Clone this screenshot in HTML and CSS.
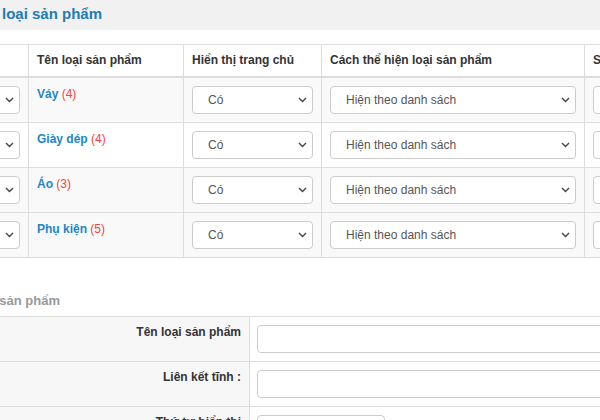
FILE: index.html
```html
<!DOCTYPE html>
<html lang="vi">
<head>
<meta charset="utf-8">
<title>Loại sản phẩm</title>
<link rel="stylesheet" href="styles.css">
</head>
<body>
<header class="topbar">
  <h1 class="page-title">Danh sách loại sản phẩm</h1>
</header>
<main class="page">
  <table class="grid">
    <colgroup>
      <col class="c-order"><col class="c-name"><col class="c-home"><col class="c-mode"><col class="c-sort">
    </colgroup>
    <thead>
      <tr>
        <th>Thứ tự</th>
        <th>Tên loại sản phẩm</th>
        <th>Hiển thị trang chủ</th>
        <th>Cách thể hiện loại sản phẩm</th>
        <th>Sắp xếp</th>
      </tr>
    </thead>
    <tbody>
      <tr class="alt">
        <td><div class="select"><span>1</span><svg class="chev" width="9" height="6" viewBox="0 0 9 6"><polyline points="1,1 4.5,4.5 8,1"/></svg></div></td>
        <td><a class="cat" href="#">Váy</a> <span class="count">(4)</span></td>
        <td><div class="select"><span>Có</span><svg class="chev" width="9" height="6" viewBox="0 0 9 6"><polyline points="1,1 4.5,4.5 8,1"/></svg></div></td>
        <td><div class="select"><span>Hiện theo danh sách</span><svg class="chev" width="9" height="6" viewBox="0 0 9 6"><polyline points="1,1 4.5,4.5 8,1"/></svg></div></td>
        <td><div class="select"><span>1</span><svg class="chev" width="9" height="6" viewBox="0 0 9 6"><polyline points="1,1 4.5,4.5 8,1"/></svg></div></td>
      </tr>
      <tr>
        <td><div class="select"><span>2</span><svg class="chev" width="9" height="6" viewBox="0 0 9 6"><polyline points="1,1 4.5,4.5 8,1"/></svg></div></td>
        <td><a class="cat" href="#">Giày dép</a> <span class="count">(4)</span></td>
        <td><div class="select"><span>Có</span><svg class="chev" width="9" height="6" viewBox="0 0 9 6"><polyline points="1,1 4.5,4.5 8,1"/></svg></div></td>
        <td><div class="select"><span>Hiện theo danh sách</span><svg class="chev" width="9" height="6" viewBox="0 0 9 6"><polyline points="1,1 4.5,4.5 8,1"/></svg></div></td>
        <td><div class="select"><span>2</span><svg class="chev" width="9" height="6" viewBox="0 0 9 6"><polyline points="1,1 4.5,4.5 8,1"/></svg></div></td>
      </tr>
      <tr class="alt">
        <td><div class="select"><span>3</span><svg class="chev" width="9" height="6" viewBox="0 0 9 6"><polyline points="1,1 4.5,4.5 8,1"/></svg></div></td>
        <td><a class="cat" href="#">Áo</a> <span class="count">(3)</span></td>
        <td><div class="select"><span>Có</span><svg class="chev" width="9" height="6" viewBox="0 0 9 6"><polyline points="1,1 4.5,4.5 8,1"/></svg></div></td>
        <td><div class="select"><span>Hiện theo danh sách</span><svg class="chev" width="9" height="6" viewBox="0 0 9 6"><polyline points="1,1 4.5,4.5 8,1"/></svg></div></td>
        <td><div class="select"><span>3</span><svg class="chev" width="9" height="6" viewBox="0 0 9 6"><polyline points="1,1 4.5,4.5 8,1"/></svg></div></td>
      </tr>
      <tr class="alt">
        <td><div class="select"><span>4</span><svg class="chev" width="9" height="6" viewBox="0 0 9 6"><polyline points="1,1 4.5,4.5 8,1"/></svg></div></td>
        <td><a class="cat" href="#">Phụ kiện</a> <span class="count">(5)</span></td>
        <td><div class="select"><span>Có</span><svg class="chev" width="9" height="6" viewBox="0 0 9 6"><polyline points="1,1 4.5,4.5 8,1"/></svg></div></td>
        <td><div class="select"><span>Hiện theo danh sách</span><svg class="chev" width="9" height="6" viewBox="0 0 9 6"><polyline points="1,1 4.5,4.5 8,1"/></svg></div></td>
        <td><div class="select"><span>4</span><svg class="chev" width="9" height="6" viewBox="0 0 9 6"><polyline points="1,1 4.5,4.5 8,1"/></svg></div></td>
      </tr>
    </tbody>
  </table>

  <div class="legend">Thêm loại sản phẩm</div>
  <table class="form">
    <colgroup><col class="c-label"><col class="c-field"></colgroup>
    <tbody>
      <tr><th>Tên loại sản phẩm</th><td><input class="input" type="text"></td></tr>
      <tr><th>Liên kết tĩnh :</th><td><input class="input" type="text"></td></tr>
      <tr><th>Thứ tự hiển thị</th><td><input class="input short" type="text"></td></tr>
    </tbody>
  </table>
</main>
</body>
</html>
```
FILE: styles.css
```css
html, body {
  margin: 0;
  padding: 0;
  overflow: hidden;
  background: #fff;
}
body {
  font-family: "Liberation Sans", Arial, sans-serif;
  font-size: 12px;
  line-height: 17px;
  color: #333;
  width: 600px;
  height: 420px;
}

.topbar {
  height: 30px;
  background: #f1f1f1;
  overflow: hidden;
}
.page-title {
  margin: 0 0 0 -78px;
  font-size: 15px;
  font-weight: bold;
  line-height: 28px;
  color: #1f7bb3;
  white-space: nowrap;
}

.page {
  margin: 14px 0 0 -52px;
  width: 760px;
}

.grid {
  width: 760px;
  table-layout: fixed;
  border-collapse: separate;
  border-spacing: 0;
  border-top: 1px solid #ddd;
}
.c-order { width: 80px; }
.c-name { width: 155px; }
.c-home { width: 138px; }
.c-mode { width: 263px; }
.c-sort { width: 124px; }

.grid th,
.grid td {
  text-align: left;
  vertical-align: top;
  border-left: 1px solid #ddd;
  white-space: nowrap;
  overflow: hidden;
}
.grid th:first-child,
.grid td:first-child {
  border-left: 0;
}
.grid th {
  padding: 7px 8px;
  font-weight: bold;
  color: #333;
  border-bottom: 2px solid #ddd;
}
.grid td {
  padding: 8px;
  border-bottom: 1px solid #ddd;
}
.grid tr.alt td {
  background: #f9f9f9;
}

.cat {
  font-weight: bold;
  color: #1d86c6;
  text-decoration: none;
}
.count {
  color: #f1453d;
}

.select {
  display: flex;
  align-items: center;
  box-sizing: border-box;
  height: 28px;
  padding: 0 5px 0 15px;
  border: 1px solid #ccc;
  border-radius: 4px;
  background: #fff;
  color: #555;
}
.select span {
  flex: 1;
  overflow: hidden;
}
.chev {
  flex: none;
}
.chev polyline {
  fill: none;
  stroke: #444;
  stroke-width: 1.4;
}

.legend {
  margin: 34px 0 6px -13px;
  font-size: 13px;
  font-weight: bold;
  line-height: 18px;
  color: #999;
  white-space: nowrap;
}

.form {
  width: 760px;
  table-layout: fixed;
  border-collapse: separate;
  border-spacing: 0;
  border-top: 1px solid #ddd;
}
.c-label { width: 301px; }
.c-field { width: 459px; }
.form th,
.form td {
  vertical-align: top;
  border-bottom: 1px solid #ddd;
}
.form th {
  padding: 7px 8px 8px;
  text-align: right;
  font-weight: bold;
  color: #333;
  background: #f7f7f7;
  white-space: nowrap;
}
.form td {
  padding: 8px 8px 8px 7px;
  border-left: 1px solid #ddd;
}
.input {
  display: block;
  box-sizing: border-box;
  width: 100%;
  height: 28px;
  margin: 0;
  padding: 4px 10px;
  border: 1px solid #ccc;
  border-radius: 4px;
  background: #fff;
  font: inherit;
}
.input.short {
  width: 128px;
}
```
